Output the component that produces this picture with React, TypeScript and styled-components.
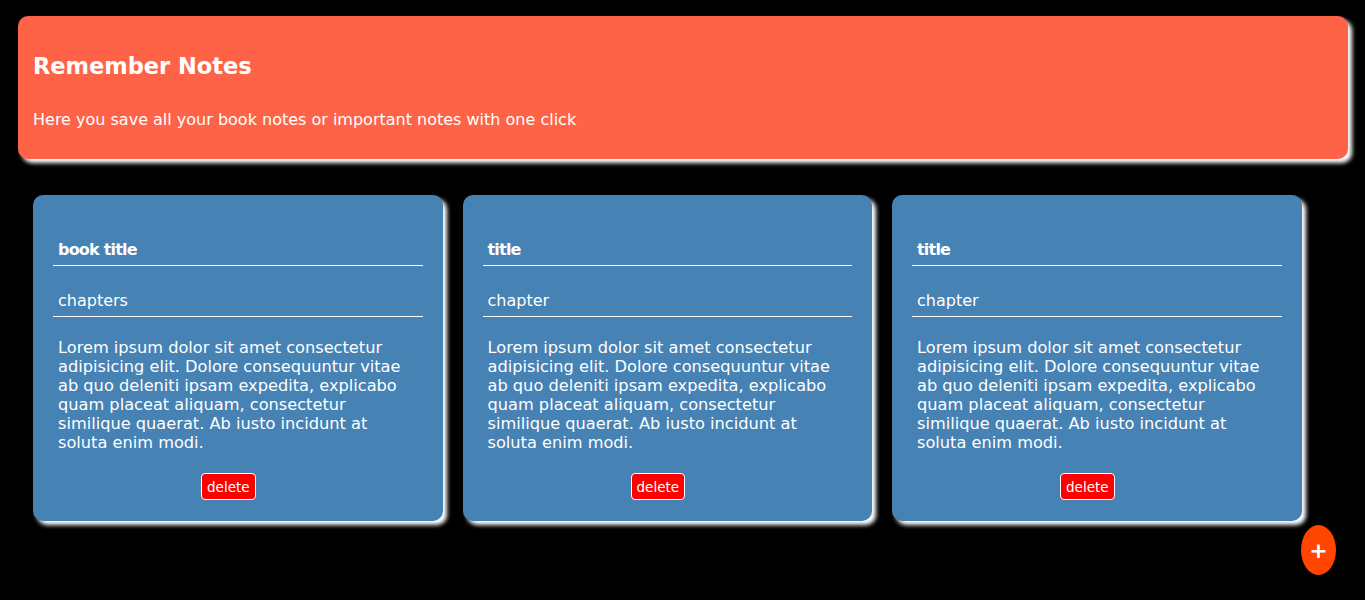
import React from "react";
import styled, { createGlobalStyle } from "styled-components";

const GlobalStyle = createGlobalStyle`
  html, body {
    margin: 0;
    background: #000;
    font-family: "DejaVu Sans", "Open Sans", sans-serif;
  }
`;

const Page = styled.div`
  min-height: 600px;
  padding: 16px 17px 0 18px;
  box-sizing: border-box;
`;

const Header = styled.header`
  background: #ff6347;
  border-radius: 10px;
  box-shadow: 4px 4px 4px #ffffff;
  padding: 36px 15px 29px;
  color: #fff;
`;

const Title = styled.h1`
  margin: 0;
  font-size: 22.5px;
  font-weight: 700;
  line-height: 28px;
`;

const Subtitle = styled.p`
  margin: 30px 0 0;
  font-size: 16px;
  line-height: 20px;
`;

const Notes = styled.section`
  display: flex;
  gap: 20px;
  margin-top: 36px;
  padding-left: 15px;
`;

const Card = styled.article`
  width: 409.5px;
  height: 326px;
  box-sizing: border-box;
  background: #4682b4;
  border-radius: 10px;
  box-shadow: 4px 4px 4px #ffffff;
  padding: 40px 20px 0;
  color: #fff;
  display: flex;
  flex-direction: column;
`;

const Field = styled.div<{ $bold?: boolean }>`
  border-bottom: 1px solid #fff;
  padding: 0 5px;
  height: 30px;
  line-height: 30px;
  font-size: 16px;
  font-weight: ${(p) => (p.$bold ? 700 : 400)};
  letter-spacing: ${(p) => (p.$bold ? "-0.8px" : "normal")};
  margin-bottom: 20px;
`;

const Body = styled.p`
  margin: 1px 0 0;
  padding: 0 5px;
  font-size: 16.2px;
  line-height: 19px;
  width: 355px;
`;

const DeleteButton = styled.button`
  align-self: flex-start;
  margin: 21px 0 0 148px;
  background: #ff0000;
  color: #fff;
  border: 1px solid #fff;
  border-radius: 4px;
  font-family: "DejaVu Sans", sans-serif;
  font-size: 13.5px;
  height: 27px;
  padding: 0 5px;
  cursor: pointer;
`;

const Fab = styled.button`
  position: fixed;
  left: 1301px;
  top: 525px;
  width: 35px;
  height: 50px;
  border-radius: 50%;
  border: none;
  background: #ff4500;
  color: #fff;
  font-size: 22px;
  font-weight: 700;
  font-family: "DejaVu Sans", sans-serif;
  padding: 0;
  cursor: pointer;
`;

const lorem =
  "Lorem ipsum dolor sit amet consectetur adipisicing elit. Dolore consequuntur vitae ab quo deleniti ipsam expedita, explicabo quam placeat aliquam, consectetur similique quaerat. Ab iusto incidunt at soluta enim modi.";

const notes = [
  { title: "book title", chapter: "chapters" },
  { title: "title", chapter: "chapter" },
  { title: "title", chapter: "chapter" },
];

export default function App() {
  return (
    <Page>
      <GlobalStyle />
      <Header>
        <Title>Remember Notes</Title>
        <Subtitle>Here you save all your book notes or important notes with one click</Subtitle>
      </Header>
      <Notes>
        {notes.map((n, i) => (
          <Card key={i}>
            <Field $bold>{n.title}</Field>
            <Field>{n.chapter}</Field>
            <Body>{lorem}</Body>
            <DeleteButton>delete</DeleteButton>
          </Card>
        ))}
      </Notes>
      <Fab>+</Fab>
    </Page>
  );
}
